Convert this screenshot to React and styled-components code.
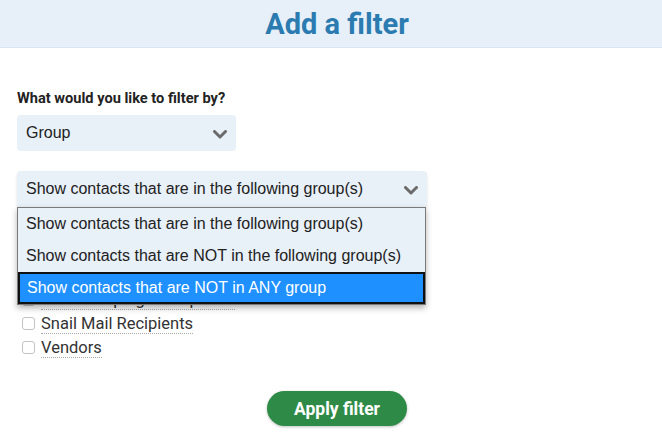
import React from 'react';
import styled, { createGlobalStyle } from 'styled-components';

const GlobalStyle = createGlobalStyle`
  html, body {
    margin: 0;
    padding: 0;
    background: #ffffff;
    font-family: Roboto, "Liberation Sans", sans-serif;
  }
`;

const groups = [
  'Board Members',
  'Customers',
  'Newsletter Subscribers',
  'SMS Campaign Recipients',
  'Snail Mail Recipients',
  'Vendors',
];

const options = [
  'Show contacts that are in the following group(s)',
  'Show contacts that are NOT in the following group(s)',
  'Show contacts that are NOT in ANY group',
];

const Chevron = () => (
  <svg width="14" height="9" viewBox="0 0 14 9">
    <polyline points="1.5,1.5 7,7 12.5,1.5" fill="none" stroke="#6b6b6b" strokeWidth="3" strokeLinecap="round" strokeLinejoin="round" />
  </svg>
);

const App = () => {
  const [selected] = React.useState(2);

  return (
    <Page>
      <GlobalStyle />
      <Header>
        <Title>Add a filter</Title>
      </Header>
      <Main>
        <Label>What would you like to filter by?</Label>
        <Select width="219px">
          <span>Group</span>
          <Chevron />
        </Select>
        <SelectWrap>
          <Select width="410px" shadow>
            <span>{options[0]}</span>
            <Chevron />
          </Select>
          <Dropdown>
            {options.map((option, i) => (
              <Option key={option} active={i === selected}>{option}</Option>
            ))}
          </Dropdown>
        </SelectWrap>
        <GroupList>
          {groups.map((group) => (
            <GroupItem key={group}>
              <Box />
              <GroupName>{group}</GroupName>
            </GroupItem>
          ))}
        </GroupList>
        <Footer>
          <ApplyButton>Apply filter</ApplyButton>
        </Footer>
      </Main>
    </Page>
  );
};

const Page = styled.div`
  width: 662px;
  height: 436px;
  overflow: hidden;
`;
const Header = styled.header`
  height: 47px;
  background: #e7f0f8;
  border-bottom: 1px solid #d9e6f1;
  display: flex;
  align-items: center;
  justify-content: center;
  padding-left: 12px;
`;
const Title = styled.h1`
  margin: 0;
  font-family: Roboto, sans-serif;
  font-weight: 700;
  font-size: 29px;
  color: #2b7bb1;
  line-height: 1;
  margin-top: 1px;
`;
const Main = styled.main`
  padding: 42px 5px 0 17px;
`;
const Label = styled.div`
  font-size: 14.6px;
  font-weight: 700;
  color: #222;
  line-height: 17px;
`;
const Select = styled.div`
  box-sizing: border-box;
  width: ${(p) => p.width};
  height: 36px;
  margin-top: 8px;
  padding: 0 9px 0 9px;
  background: #e8f0f8;
  border-radius: 4px;
  display: flex;
  align-items: center;
  justify-content: space-between;
  font-family: "Liberation Sans", Arial, sans-serif;
  font-size: 16px;
  color: #222;
  box-shadow: ${(p) => (p.shadow ? '0 2px 3px rgba(0,0,0,0.12)' : 'none')};
  svg {
    margin-top: 2px;
  }
`;
const SelectWrap = styled.div`
  position: relative;
  margin-top: 20px;
  & > div:first-child {
    margin-top: 0;
  }
`;
const Dropdown = styled.div`
  position: absolute;
  top: 100%;
  left: 0;
  width: 409px;
  box-sizing: border-box;
  background: #e8f0f8;
  border: 1px solid #7a7a7a;
  box-shadow: 0 3px 6px rgba(0,0,0,0.3);
  z-index: 2;
`;
const Option = styled.div`
  box-sizing: border-box;
  height: 32px;
  display: flex;
  align-items: center;
  padding-left: ${(p) => (p.active ? '7px' : '8px')};
  font-family: "Liberation Sans", Arial, sans-serif;
  font-size: 16px;
  color: ${(p) => (p.active ? '#ffffff' : '#222')};
  background: ${(p) => (p.active ? '#1e90ff' : 'transparent')};
  border: ${(p) => (p.active ? '2px solid #111' : 'none')};
`;
const GroupList = styled.ul`
  list-style: none;
  margin: 9px 0 0;
  padding: 0 0 0 5px;
`;
const GroupItem = styled.li`
  height: 24px;
  display: flex;
  align-items: center;
  gap: 6px;
`;
const Box = styled.span`
  width: 11px;
  height: 11px;
  border: 1px solid #c4c4c4;
  border-radius: 3px;
  background: #fff;
  margin-top: -2px;
`;
const GroupName = styled.span`
  font-size: 16.5px;
  color: #333;
  line-height: 19px;
  border-bottom: 1px dotted #aaa;
`;
const Footer = styled.div`
  display: flex;
  justify-content: center;
  margin-top: 31px;
`;
const ApplyButton = styled.button`
  width: 140px;
  height: 35px;
  border: none;
  border-radius: 18px;
  background: #2e8b47;
  color: #fff;
  font-family: Roboto, sans-serif;
  font-weight: 700;
  font-size: 17.5px;
  box-shadow: 0 1px 3px rgba(0,0,0,0.25);
`;

export default App;
